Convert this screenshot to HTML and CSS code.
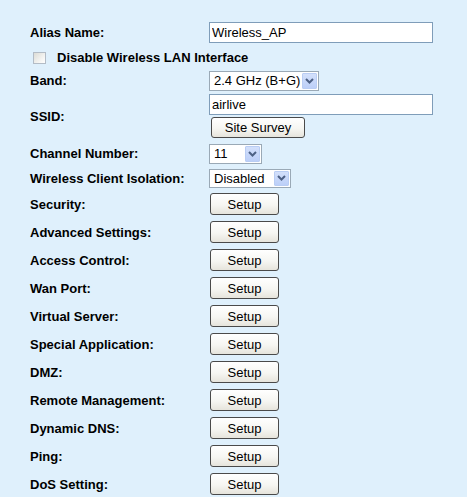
FILE: index.html
```html
<!DOCTYPE html>
<html>
<head>
<meta charset="utf-8">
<link rel="stylesheet" href="styles.css">
</head>
<body>
<div class="form">
  <div class="row h25">
    <div class="lbl">Alias Name:</div>
    <input class="txt" type="text" value="Wireless_AP">
  </div>
  <div class="row h25">
    <input class="chk" type="checkbox">
    <span class="lbl wide">Disable Wireless LAN Interface</span>
  </div>
  <div class="row h21">
    <div class="lbl">Band:</div>
    <span class="sel w-band"><select><option>2.4 GHz (B+G)</option></select><span class="arr"><svg width="9" height="6" viewBox="0 0 9 6"><path d="M1 1 L4.5 4.5 L8 1" fill="none" stroke="#4d6185" stroke-width="2"/></svg></span></span>
  </div>
  <div class="row h50">
    <div class="lbl">SSID:</div>
    <div class="stack">
      <input class="txt" type="text" value="airlive">
      <button class="btn survey">Site Survey</button>
    </div>
  </div>
  <div class="row h25">
    <div class="lbl">Channel Number:</div>
    <span class="sel w-ch"><select><option>11</option></select><span class="arr"><svg width="9" height="6" viewBox="0 0 9 6"><path d="M1 1 L4.5 4.5 L8 1" fill="none" stroke="#4d6185" stroke-width="2"/></svg></span></span>
  </div>
  <div class="row h24">
    <div class="lbl">Wireless Client Isolation:</div>
    <span class="sel w-iso"><select><option>Disabled</option></select><span class="arr"><svg width="9" height="6" viewBox="0 0 9 6"><path d="M1 1 L4.5 4.5 L8 1" fill="none" stroke="#4d6185" stroke-width="2"/></svg></span></span>
  </div>
  <div class="row h28"><div class="lbl">Security:</div><button class="btn">Setup</button></div>
  <div class="row h28"><div class="lbl">Advanced Settings:</div><button class="btn">Setup</button></div>
  <div class="row h28"><div class="lbl">Access Control:</div><button class="btn">Setup</button></div>
  <div class="row h28"><div class="lbl">Wan Port:</div><button class="btn">Setup</button></div>
  <div class="row h28"><div class="lbl">Virtual Server:</div><button class="btn">Setup</button></div>
  <div class="row h28"><div class="lbl">Special Application:</div><button class="btn">Setup</button></div>
  <div class="row h28"><div class="lbl">DMZ:</div><button class="btn">Setup</button></div>
  <div class="row h28"><div class="lbl">Remote Management:</div><button class="btn">Setup</button></div>
  <div class="row h28"><div class="lbl">Dynamic DNS:</div><button class="btn">Setup</button></div>
  <div class="row h28"><div class="lbl">Ping:</div><button class="btn">Setup</button></div>
  <div class="row h28"><div class="lbl">DoS Setting:</div><button class="btn">Setup</button></div>
</div>
</body>
</html>
```
FILE: styles.css
```css
html, body {
  margin: 0;
  padding: 0;
  background: #dff0fc;
  font-family: "Liberation Sans", Arial, sans-serif;
  font-size: 13px;
  color: #000;
}
.form {
  padding: 20px 0 0 30px;
}
.row {
  display: flex;
  align-items: center;
}
.h21 { height: 21px; }
.h24 { height: 24px; }
.h25 { height: 25px; }
.h28 { height: 28px; }
.h50 { height: 50px; }
.lbl {
  width: 179px;
  flex: none;
  font-weight: bold;
  font-size: 13px;
}
.lbl.wide { width: auto; }
.txt {
  box-sizing: border-box;
  width: 224px;
  height: 21px;
  margin: 0;
  padding: 0 2px;
  border: 1px solid #7f9db9;
  background: #fff;
  font-family: "Liberation Sans", Arial, sans-serif;
  font-size: 13px;
  color: #000;
  outline: none;
}
.chk {
  appearance: none;
  -webkit-appearance: none;
  box-sizing: border-box;
  width: 13px;
  height: 12px;
  margin: 0 11px 0 3px;
  border: 1px solid #b3bcc6;
  background: linear-gradient(135deg, #dcdcd6, #f6f6f4 70%, #fff);
}
.sel {
  position: relative;
  display: inline-block;
  flex: none;
}
.sel select {
  appearance: none;
  -webkit-appearance: none;
  box-sizing: border-box;
  width: 100%;
  height: 20px;
  margin: 0;
  padding: 0 0 0 4px;
  border: 1px solid #9aa9b6;
  border-radius: 0;
  background: #fff;
  font-family: "Liberation Sans", Arial, sans-serif;
  font-size: 13px;
  color: #000;
  display: block;
}
.w-band { width: 110px; }
.w-ch { width: 53px; }
.w-iso { width: 82px; }
.w-iso select { height: 19px; }
.arr {
  position: absolute;
  top: 2px;
  right: 2px;
  bottom: 2px;
  width: 15px;
  box-sizing: border-box;
  border: 1px solid #b9cdf4;
  border-radius: 1px;
  background: linear-gradient(#d3e0fb, #bccff8);
  display: flex;
  align-items: center;
  justify-content: center;
}
.stack {
  display: flex;
  flex-direction: column;
  gap: 2px;
}
.btn {
  box-sizing: border-box;
  width: 69px;
  height: 22px;
  margin: 0 0 0 1px;
  padding: 0;
  border: 1px solid #4a4a4a;
  border-radius: 3px;
  background: linear-gradient(#ffffff, #f6f6f2 55%, #e6e4dc);
  font-family: "Liberation Sans", Arial, sans-serif;
  font-size: 13px;
  color: #000;
}
.btn.survey {
  width: 94px;
  height: 21px;
  margin-left: 2px;
}
```
